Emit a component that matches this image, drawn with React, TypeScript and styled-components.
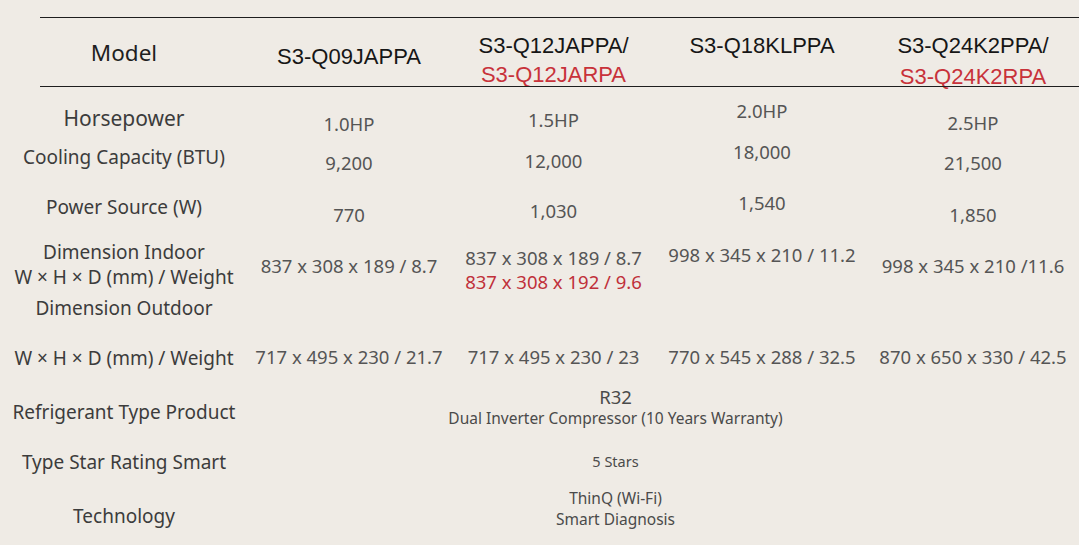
import styled, { createGlobalStyle } from 'styled-components';

const GlobalStyle = createGlobalStyle`
  html, body {
    margin: 0;
    padding: 0;
    background: #efebe5;
  }
`;

const COLUMNS = '248px 202px 207px 210px 212px';

type Spec = {
  label: string[];
  labelShift: number;
  labelSize?: number;
  height: number;
  values?: { lines: { text: string; red?: boolean }[]; shift: number }[];
  merged?: { lines: { text: string; size: 'big' | 'mid' | 'small' }[]; shift: number };
};

const specs: Spec[] = [
  {
    label: ['Horsepower'],
    labelShift: 6,
    labelSize: 21,
    height: 52,
    values: [
      { lines: [{ text: '1.0HP' }], shift: 12 },
      { lines: [{ text: '1.5HP' }], shift: 8 },
      { lines: [{ text: '2.0HP' }], shift: -1 },
      { lines: [{ text: '2.5HP' }], shift: 11 },
    ],
  },
  {
    label: ['Cooling Capacity (BTU)'],
    labelShift: -3,
    height: 45,
    values: [
      { lines: [{ text: '9,200' }], shift: 2 },
      { lines: [{ text: '12,000' }], shift: 0 },
      { lines: [{ text: '18,000' }], shift: -9 },
      { lines: [{ text: '21,500' }], shift: 2 },
    ],
  },
  {
    label: ['Power Source (W)'],
    labelShift: 0,
    height: 49,
    values: [
      { lines: [{ text: '770' }], shift: 7 },
      { lines: [{ text: '1,030' }], shift: 3 },
      { lines: [{ text: '1,540' }], shift: -5 },
      { lines: [{ text: '1,850' }], shift: 7 },
    ],
  },
  {
    label: ['Dimension Indoor', 'W × H × D (mm) / Weight'],
    labelShift: 2,
    height: 60,
    values: [
      { lines: [{ text: '837 x 308 x 189 / 8.7' }], shift: 3 },
      {
        lines: [{ text: '837 x 308 x 189 / 8.7' }, { text: '837 x 308 x 192 / 9.6', red: true }],
        shift: 7,
      },
      { lines: [{ text: '998 x 345 x 210 / 11.2' }], shift: -8 },
      { lines: [{ text: '998 x 345 x 210 /11.6' }], shift: 3 },
    ],
  },
  {
    label: ['Dimension Outdoor'],
    labelShift: -4,
    height: 41,
    values: [],
  },
  {
    label: ['W × H × D (mm) / Weight'],
    labelShift: -1,
    height: 52,
    values: [
      { lines: [{ text: '717 x 495 x 230 / 21.7' }], shift: -2 },
      { lines: [{ text: '717 x 495 x 230 / 23' }], shift: -2 },
      { lines: [{ text: '770 x 545 x 288 / 32.5' }], shift: -2 },
      { lines: [{ text: '870 x 650 x 330 / 42.5' }], shift: -2 },
    ],
  },
  {
    label: ['Refrigerant Type Product'],
    labelShift: 0,
    height: 52,
    merged: {
      lines: [
        { text: 'R32', size: 'big' },
        { text: 'Dual Inverter Compressor (10 Years Warranty)', size: 'mid' },
      ],
      shift: -5,
    },
  },
  {
    label: ['Type Star Rating Smart'],
    labelShift: 0,
    height: 51,
    merged: { lines: [{ text: '5 Stars', size: 'small' }], shift: -1 },
  },
  {
    label: ['Technology'],
    labelShift: -2,
    height: 57,
    merged: {
      lines: [
        { text: 'ThinQ (Wi-Fi)', size: 'mid' },
        { text: 'Smart Diagnosis', size: 'mid' },
      ],
      shift: -9,
    },
  },
];

const models = [
  { lines: [{ text: 'S3-Q09JAPPA' }], shift: 1.5 },
  { lines: [{ text: 'S3-Q12JAPPA/' }, { text: 'S3-Q12JARPA', red: true }], shift: 5.5 },
  { lines: [{ text: 'S3-Q18KLPPA' }], shift: -9.5 },
  { lines: [{ text: 'S3-Q24K2PPA/' }, { text: 'S3-Q24K2RPA', red: true }], shift: 6.5 },
];

const App = () => {
  return (
    <Page>
      <GlobalStyle />
      <HeaderRow>
        <ModelLabel $shift={-2.5}>Model</ModelLabel>
        {models.map((model, i) => (
          <ModelCell key={i} $shift={model.shift} $wide={i === 3}>
            {model.lines.map((line) => (
              <ModelLine key={line.text} $red={line.red}>
                {line.text}
              </ModelLine>
            ))}
          </ModelCell>
        ))}
      </HeaderRow>
      {specs.map((spec) => (
        <Row key={spec.label.join()} $height={spec.height}>
          <LabelCell $shift={spec.labelShift} $size={spec.labelSize}>
            {spec.label.map((line) => (
              <span key={line}>{line}</span>
            ))}
          </LabelCell>
          {spec.values?.map((value, i) => (
            <ValueCell key={i} $shift={value.shift}>
              {value.lines.map((line) => (
                <ValueLine key={line.text} $red={line.red}>
                  {line.text}
                </ValueLine>
              ))}
            </ValueCell>
          ))}
          {spec.merged && (
            <MergedCell $shift={spec.merged.shift}>
              {spec.merged.lines.map((line) => (
                <MergedLine key={line.text} $size={line.size}>
                  {line.text}
                </MergedLine>
              ))}
            </MergedCell>
          )}
        </Row>
      ))}
    </Page>
  );
};

const Page = styled.div`
  width: 1079px;
  height: 545px;
  overflow: hidden;
  padding-top: 17px;
  box-sizing: border-box;
  background: #efebe5;
`;

const HeaderRow = styled.div`
  position: relative;
  display: grid;
  grid-template-columns: ${COLUMNS};
  height: 69px;

  &::before,
  &::after {
    content: '';
    position: absolute;
    left: 40px;
    right: 0;
    height: 1px;
    background: #1e1e1e;
    z-index: 1;
  }

  &::before {
    top: 0;
  }

  &::after {
    bottom: -1px;
  }
`;

const Row = styled.div<{ $height: number }>`
  display: grid;
  grid-template-columns: ${COLUMNS};
  height: ${(p) => p.$height}px;
`;

const Cell = styled.div<{ $shift: number }>`
  display: flex;
  flex-direction: column;
  align-items: center;
  justify-content: center;
  text-align: center;
  white-space: nowrap;
  box-sizing: border-box;
  padding-top: ${(p) => Math.max(0, p.$shift * 2)}px;
  padding-bottom: ${(p) => Math.max(0, -p.$shift * 2)}px;
`;

const ModelLabel = styled(Cell)`
  font-family: 'Noto Sans', sans-serif;
  font-size: 22.5px;
  color: #1f1f1f;
`;

const ModelCell = styled(Cell)<{ $wide?: boolean }>`
  font-family: 'Liberation Sans', Arial, sans-serif;
  font-size: 22px;
  line-height: ${(p) => (p.$wide ? 31 : 29)}px;
`;

const ModelLine = styled.span<{ $red?: boolean }>`
  color: ${(p) => (p.$red ? '#c8323a' : '#161616')};
`;

const LabelCell = styled(Cell)<{ $size?: number }>`
  font-family: 'Noto Sans', sans-serif;
  font-size: ${(p) => p.$size ?? 19}px;
  line-height: 25px;
  color: #3c3c3c;
`;

const ValueCell = styled(Cell)`
  font-family: 'Noto Sans', sans-serif;
  font-size: 18.5px;
  line-height: 24px;
`;

const ValueLine = styled.span<{ $red?: boolean }>`
  color: ${(p) => (p.$red ? '#c0303a' : '#555555')};
`;

const MergedCell = styled(Cell)`
  grid-column: 2 / -1;
  padding-right: 96px;
  font-family: 'Noto Sans', sans-serif;
  color: #4a4a4a;
`;

const sizes = { big: [18.5, 23], mid: [15.5, 21], small: [14.5, 21] };

const MergedLine = styled.span<{ $size: 'big' | 'mid' | 'small' }>`
  font-size: ${(p) => sizes[p.$size][0]}px;
  line-height: ${(p) => sizes[p.$size][1]}px;
`;

export default App;
